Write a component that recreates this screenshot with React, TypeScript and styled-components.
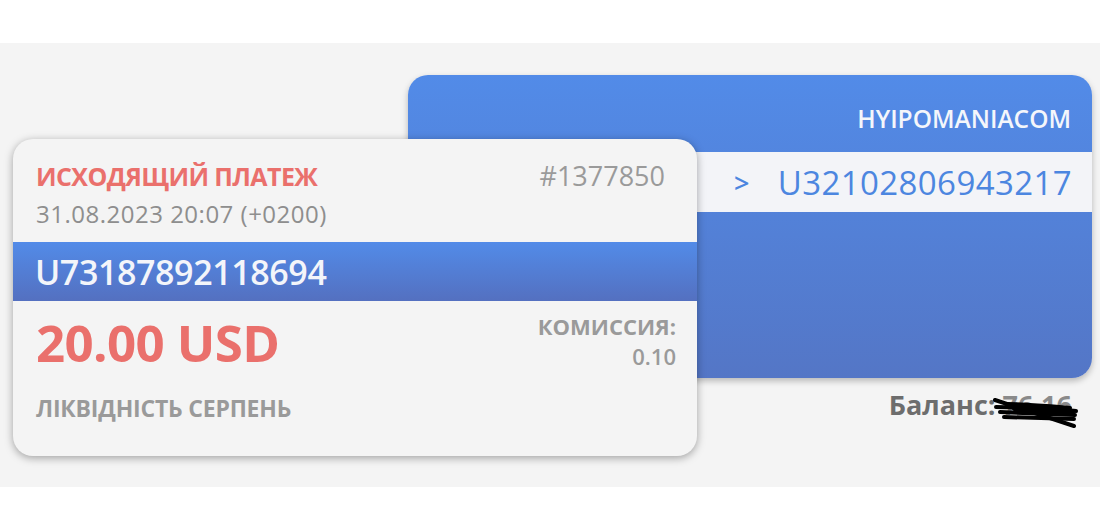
import styled, { createGlobalStyle } from "styled-components";

const GlobalStyle = createGlobalStyle`
    html, body {
        margin: 0;
        padding: 0;
        background: #ffffff;
    }
    body {
        font-family: "Open Sans", "Noto Sans", "DejaVu Sans", sans-serif;
    }
`

const Band = styled.section`
    margin-top: 43px;
    background: #f4f4f4;
    padding: 32px 8px 31px 13px;
    display: grid;
    grid-template-columns: 395px 289px 395px;
    grid-template-rows: 64px 239px 78px;
`

const WalletCard = styled.div`
    grid-column: 2 / 4;
    grid-row: 1 / 3;
    border-radius: 20px;
    background: linear-gradient(180deg, #528be8 0%, #5476c6 100%);
    box-shadow: 0 3px 6px rgba(0, 0, 0, .25);
    display: flex;
    flex-direction: column;
`

const WalletName = styled.div`
    height: 77px;
    box-sizing: border-box;
    padding: 0 21px 17px 0;
    display: flex;
    align-items: flex-end;
    justify-content: flex-end;
    color: #f4f6fb;
    font-size: 24.5px;
    font-weight: 600;
`

const WalletRow = styled.div`
    height: 60px;
    background: #f3f4f8;
    display: flex;
    align-items: center;
    justify-content: flex-end;
    gap: 28px;
    padding-right: 20px;
    color: #4c86e0;
    font-size: 33px;
    font-weight: 500;
    letter-spacing: .4px;
`

const Arrow = styled.span`
    font-size: 27px;
    font-weight: 600;
`

const PaymentCard = styled.div`
    grid-column: 1 / 3;
    grid-row: 2 / 4;
    z-index: 1;
    border-radius: 20px;
    background: #f4f4f4;
    box-shadow: 0 2px 8px rgba(0, 0, 0, .35);
    display: flex;
    flex-direction: column;
    overflow: hidden;
`

const CardHead = styled.div`
    padding: 17px 32px 0 23px;
    height: 103px;
    box-sizing: border-box;
    display: grid;
    grid-template-columns: 1fr auto;
    align-content: start;
`

const Title = styled.div`
    color: #ea706c;
    font-size: 25px;
    font-weight: 700;
    line-height: 40px;
    letter-spacing: -.6px;
`

const PaymentId = styled.div`
    color: #9a9a9a;
    font-size: 27px;
    font-weight: 500;
    line-height: 40px;
`

const DateLine = styled.div`
    grid-column: 1 / 3;
    margin-top: 3px;
    color: #8e8e8e;
    font-size: 24px;
    font-weight: 500;
    line-height: 30px;
    letter-spacing: .5px;
`

const AccountBar = styled.div`
    height: 59px;
    padding-left: 22px;
    display: flex;
    align-items: center;
    background: linear-gradient(180deg, #528be8 0%, #5470c0 100%);
    color: #f3f5fa;
    font-size: 34px;
    font-weight: 600;
    letter-spacing: -.4px;
`

const CardBody = styled.div`
    flex: 1;
    padding: 10px 21px 0 23px;
    display: grid;
    grid-template-columns: 1fr auto;
    grid-template-rows: 62px auto;
`

const Amount = styled.div`
    color: #ea706c;
    font-size: 51px;
    font-weight: 700;
    line-height: 62px;
    letter-spacing: -.6px;
`

const Fee = styled.div`
    text-align: right;
    color: #9a9a9a;
    font-size: 22px;
    font-weight: 700;
    line-height: 30px;

    span {
        display: block;
        font-weight: 600;
    }
`

const Note = styled.div`
    grid-column: 1 / 3;
    margin-top: 19px;
    color: #9a9a9a;
    font-size: 23px;
    font-weight: 700;
    letter-spacing: -.2px;
`

const Balance = styled.div`
    grid-column: 3;
    grid-row: 3;
    justify-self: end;
    align-self: start;
    margin: 8px 20px 0 0;
    position: relative;
    color: #6d6d6d;
    font-size: 27px;
    font-weight: 700;

    span {
        color: #8a8a8a;
    }
`

const Scribble = styled.svg`
    position: absolute;
    right: -6px;
    top: 5px;
    width: 86px;
    height: 40px;
`

export default function App() {
    return (
        <>
            <GlobalStyle />
            <Band>
                <WalletCard>
                    <WalletName>HYIPOMANIACOM</WalletName>
                    <WalletRow>
                        <Arrow>&gt;</Arrow>
                        <span>U32102806943217</span>
                    </WalletRow>
                </WalletCard>
                <PaymentCard>
                    <CardHead>
                        <Title>ИСХОДЯЩИЙ ПЛАТЕЖ</Title>
                        <PaymentId>#1377850</PaymentId>
                        <DateLine>31.08.2023 20:07 (+0200)</DateLine>
                    </CardHead>
                    <AccountBar>U73187892118694</AccountBar>
                    <CardBody>
                        <Amount>20.00 USD</Amount>
                        <Fee>
                            КОМИССИЯ:
                            <span>0.10</span>
                        </Fee>
                        <Note>ЛІКВІДНІСТЬ СЕРПЕНЬ</Note>
                    </CardBody>
                </PaymentCard>
                <Balance>
                    Баланс: <span>76.16</span>
                    <Scribble viewBox="0 0 86 40">
                        <g stroke="#000" strokeWidth="4" strokeLinecap="round" fill="none">
                            <path d="M3 9 L82 35" />
                            <path d="M4 16 C30 16 56 18 84 20" />
                            <path d="M8 21 L83 24" />
                            <path d="M14 13 C36 13 56 15 78 17" />
                            <path d="M12 26 L82 28" />
                            <path d="M22 18 L81 22" />
                        </g>
                    </Scribble>
                </Balance>
            </Band>
        </>
    )
}
